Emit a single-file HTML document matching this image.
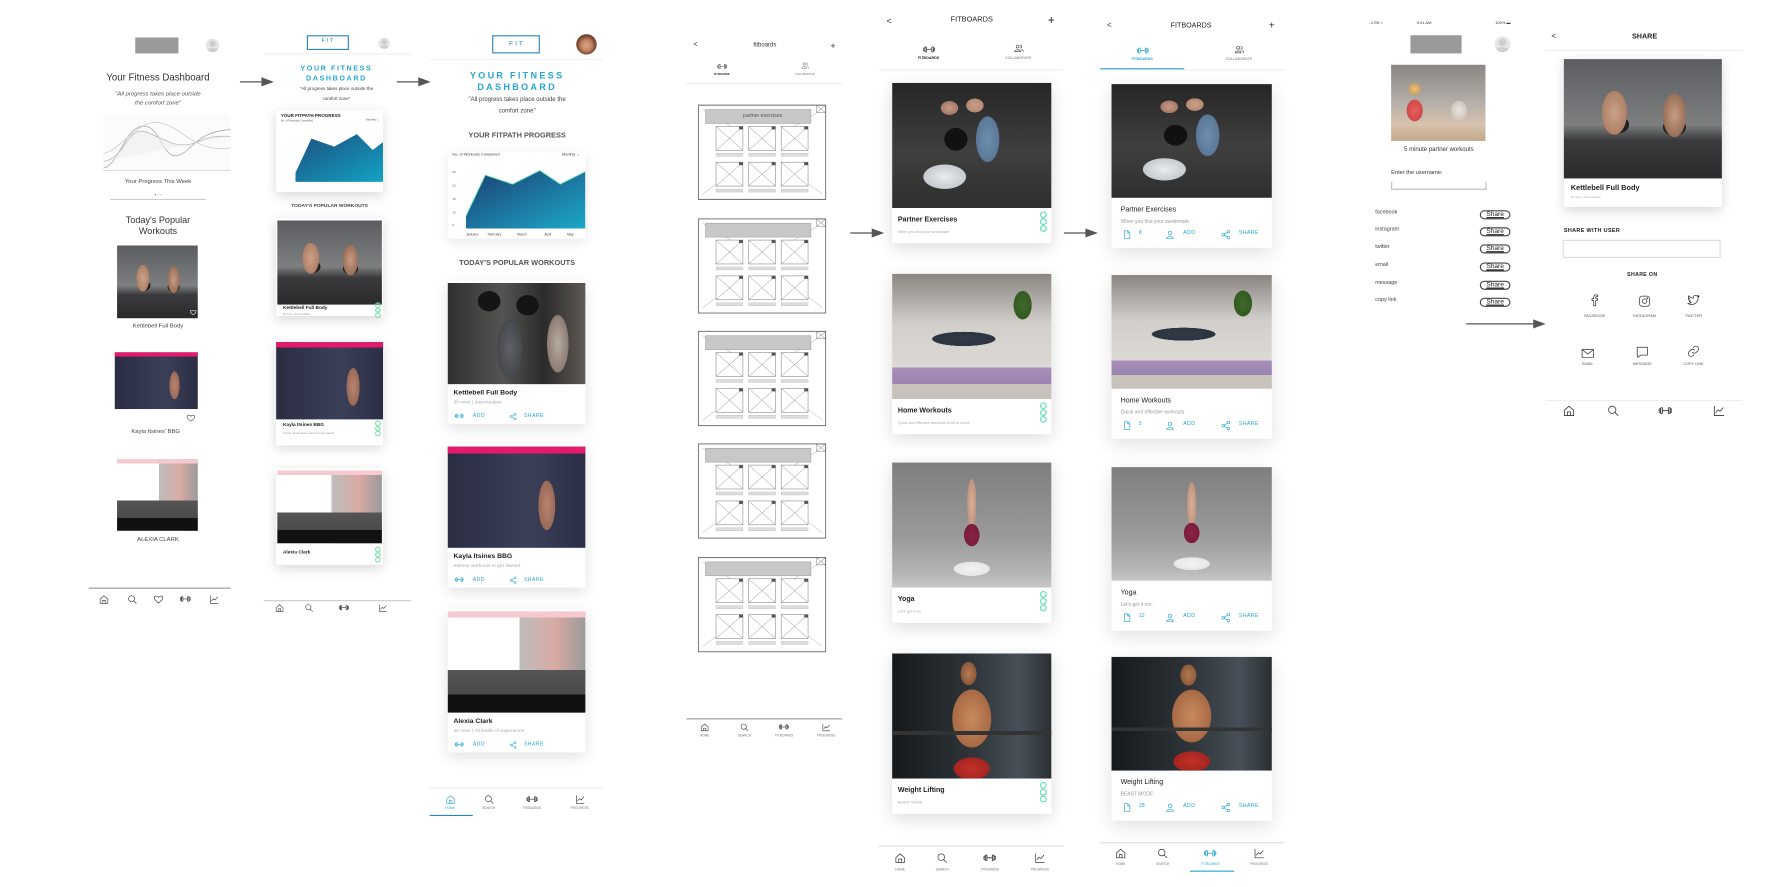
<!DOCTYPE html>
<html><head><meta charset="utf-8">
<style>
html,body{margin:0;padding:0;background:#fff;width:1773px;height:887px;overflow:hidden}
#s{position:absolute;left:0;top:0;width:1560px;height:780px;transform:scale(1.13654);transform-origin:0 0;font-family:"Liberation Sans",sans-serif;color:#222}
.a{position:absolute}
.t{position:absolute;white-space:nowrap;line-height:1}
.card{position:absolute;background:#fff;box-shadow:0 3px 10px rgba(0,0,0,.16)}
svg{display:block}
</style></head><body><div id="s"></div>
<script>
const S=document.getElementById('s');let H='';
function add(h){H+=h}
function T(x,y,txt,sz,o){o=o||{};let al=o.al||'l';let c=o.c||'#222';let w=o.w||200;let left=al=='c'?x-w/2:(al=='r'?x-w:x);
add(`<div class="t" style="left:${left}px;top:${y-sz*0.55}px;width:${w}px;text-align:${al=='c'?'center':al=='r'?'right':'left'};font-size:${sz}px;color:${c};font-weight:${o.b?'bold':'normal'};letter-spacing:${o.ls||0}px;font-style:${o.i?'italic':'normal'}">${txt}</div>`)}
function R(x,y,w,h,st){add(`<div class="a" style="left:${x}px;top:${y}px;width:${w}px;height:${h}px;${st||''}"></div>`)}
const P={
home:'<path d="M3 11L12 3L21 11V21H3Z M9 21V14H15V21"/>',
search:'<circle cx="10" cy="10" r="7"/><path d="M15 15L21 21"/>',
db:'<path d="M7 12H17"/><rect x="4" y="7" width="3" height="10" rx="1"/><rect x="17" y="7" width="3" height="10" rx="1"/><rect x="1.5" y="9" width="2.5" height="6" rx="1"/><rect x="20" y="9" width="2.5" height="6" rx="1"/>',
chart:'<path d="M3 3V21H21 M6 15L10 10L14 13L20 6"/>',
heart:'<path d="M12 20C5 15 2 12 2 8.5C2 5.5 4.5 4 6.8 4C9 4 10.8 5.5 12 7C13.2 5.5 15 4 17.2 4C19.5 4 22 5.5 22 8.5C22 12 19 15 12 20Z"/>',
share:'<circle cx="6" cy="12" r="3"/><circle cx="18" cy="5" r="3"/><circle cx="18" cy="19" r="3"/><path d="M8.6 10.5L15.4 6.5M8.6 13.5L15.4 17.5"/>',
doc:'<path d="M6 3H14L19 8V21H6Z M14 3V8H19"/>',
person:'<circle cx="12" cy="8" r="4"/><path d="M4 21C4 15 20 15 20 21Z"/>',
people:'<circle cx="9" cy="8" r="3.5"/><path d="M2 20C2 14 16 14 16 20Z"/><path d="M15 4.5A3.5 3.5 0 0 1 15 11.5M18 15C21 16 22 18 22 20"/>',
fb:'<path d="M14 22V13H17L17.5 9.5H14V7.5C14 6.5 14.5 6 15.5 6H17.7V3C17 2.9 16 2.8 15 2.8C12.3 2.8 10.5 4.4 10.5 7.3V9.5H7.5V13H10.5V22Z"/>',
ig:'<rect x="3" y="3" width="18" height="18" rx="5"/><circle cx="12" cy="12" r="4"/><circle cx="17" cy="7" r=".8"/>',
tw:'<path d="M22 5.5C21 6 20.2 6.2 19.5 6.3C20.3 5.8 20.9 5 21.2 4C20.4 4.5 19.5 4.8 18.6 5C17.8 4.2 16.8 3.8 15.7 3.8C13.5 3.8 11.7 5.6 11.7 7.8C11.7 8.1 11.7 8.4 11.8 8.7C8.5 8.5 5.5 7 3.5 4.5C2.5 6.5 3.5 8.6 5 9.7C4.3 9.7 3.7 9.5 3.2 9.2C3.2 11.2 4.6 12.8 6.4 13.2C5.8 13.4 5.2 13.4 4.6 13.3C5.1 14.9 6.6 16 8.4 16.1C6.6 17.5 4.300 18.2 2 18C4 19.2 6.2 19.9 8.5 19.9C16.1 19.9 20.2 13.6 20.2 8.2V7.7C21 7.1 21.6 6.4 22 5.5Z"/>',
mail:'<rect x="2" y="5" width="20" height="14"/><path d="M2 5L12 13L22 5"/>',
msg:'<path d="M3 3H21V17H9L4 21V17H3Z"/>',
link:'<path d="M10 14A5 5 0 0 0 17 14L20 11A5 5 0 0 0 13 4L11.5 5.5M14 10A5 5 0 0 0 7 10L4 13A5 5 0 0 0 11 20L12.5 18.5"/>'
};
function I(n,cx,cy,sz,c,sw){add(`<svg class="a" style="left:${cx-sz/2}px;top:${cy-sz/2}px" width="${sz}" height="${sz}" viewBox="0 0 24 24" fill="none" stroke="${c||'#333'}" stroke-width="${sw||1.6}" stroke-linecap="round" stroke-linejoin="round">${P[n]}</svg>`)}
function arrow(x1,x2,y){add(`<svg class="a" style="left:${x1}px;top:${y-5}px" width="${x2-x1}" height="10"><line x1="0" y1="5" x2="${x2-x1-8}" y2="5" stroke="#555" stroke-width="1.1"/><polygon points="${x2-x1-11},1 ${x2-x1},5 ${x2-x1-11},9" fill="#555"/></svg>`)}
function photo(k,x,y,w,h){let bg;
if(k=='kb')bg='radial-gradient(ellipse 13% 30% at 32% 45%,#c9a28a 0,#b08066 60%,transparent 62%),radial-gradient(ellipse 12% 30% at 70% 47%,#c69c84 0,#9a6f58 60%,transparent 62%),radial-gradient(ellipse 8% 8% at 34% 55%,#222 0,#222 90%,transparent 92%),radial-gradient(ellipse 8% 8% at 70% 57%,#222 0,#222 90%,transparent 92%),linear-gradient(#5b5d60 0,#7c7e80 55%,#3b3b3d 68%,#2a2a2c 100%)';
else if(k=='gym')bg='radial-gradient(ellipse 9% 11% at 30% 18%,#151515 0,#151515 90%,transparent 92%),radial-gradient(ellipse 9% 11% at 58% 22%,#151515 0,#151515 90%,transparent 92%),radial-gradient(ellipse 13% 40% at 45% 65%,#5d6166 0,#45484c 70%,transparent 72%),radial-gradient(ellipse 11% 40% at 80% 60%,#b8aba0 0,#8b7d73 70%,transparent 72%),linear-gradient(90deg,#2f2f2f,#545452 40%,#2b2b2b 70%,#5e5954)';
else if(k=='kayla')bg='linear-gradient(#e51a6b 0,#e51a6b 7%,transparent 7%),radial-gradient(ellipse 10% 40% at 72% 58%,#b88470 0,#9a6a57 60%,transparent 62%),linear-gradient(90deg,#2a2d42,#3b3f58 60%,#2b2e44)';
else if(k=='alexia')bg='linear-gradient(#f6c9d0 0,#f6c9d0 6%,transparent 6%),linear-gradient(transparent 0,transparent 58%,#555 58%,#4a4a4a 82%,#111 82%),linear-gradient(90deg,#fff 0,#fff 52%,#bdbdbd 52%,#d9aaa3 78%,#9a9a9a)';
else if(k=='partner')bg='radial-gradient(ellipse 8% 10% at 40% 45%,#111 0,#111 90%,transparent 92%),radial-gradient(ellipse 22% 16% at 33% 75%,#e8ecee 0,#c5cbcf 60%,transparent 62%),radial-gradient(ellipse 12% 30% at 60% 45%,#6f8fb0 0,#5a7896 60%,transparent 62%),radial-gradient(ellipse 9% 9% at 52% 18%,#caa089 0,#b58a73 60%,transparent 62%),radial-gradient(ellipse 9% 9% at 36% 20%,#c69a85 0,#a67a66 60%,transparent 62%),linear-gradient(#262626,#3f3f3f 55%,#2e2e2e)';
else if(k=='home')bg='radial-gradient(ellipse 28% 8% at 45% 52%,#333b48 0,#2c3440 70%,transparent 72%),radial-gradient(ellipse 8% 16% at 82% 25%,#3f6a2a 0,#335a22 70%,transparent 72%),linear-gradient(transparent 0,transparent 75%,#a78fb8 75%,#9b82b0 88%,#c8c2bd 88%),linear-gradient(#8a8580,#d2cec9 40%,#e4e0dc)';
else if(k=='yoga')bg='radial-gradient(ellipse 6% 11% at 50% 58%,#8a2245 0,#7a1c3c 80%,transparent 82%),radial-gradient(ellipse 14% 7% at 50% 85%,#f4f4f4 0,#e6e6e6 80%,transparent 82%),radial-gradient(ellipse 4% 28% at 50% 33%,#d8b09a 0,#c0957f 70%,transparent 72%),linear-gradient(#7e7e7e,#9a9a9a 60%,#b6b6b6 90%,#c8c8c8)';
else if(k=='weights')bg='linear-gradient(transparent 0,transparent 62%,#333 62%,#333 65%,transparent 65%),radial-gradient(ellipse 14% 11% at 50% 92%,#c4302a 0,#a52520 80%,transparent 82%),radial-gradient(ellipse 20% 38% at 50% 52%,#c98a60 0,#a86a45 60%,transparent 62%),radial-gradient(ellipse 7% 13% at 48% 16%,#b57a55 0,#8c5a3a 70%,transparent 72%),linear-gradient(90deg,#15191c,#2e3439 50%,#475058 80%,#2a2f33)';
else if(k=='hi5')bg='radial-gradient(ellipse 12% 20% at 25% 60%,#e86060 0,#d04848 70%,transparent 72%),radial-gradient(ellipse 12% 18% at 72% 60%,#e9e3dc 0,#cfc7bf 70%,transparent 72%),radial-gradient(ellipse 9% 11% at 25% 32%,#e8c27a 0,#caa060 70%,transparent 72%),linear-gradient(#8a8683,#b5afa9 50%,#d6c2ad 78%,#c4a888)';
add(`<div class="a" style="left:${x}px;top:${y}px;width:${w}px;height:${h}px;background:${bg}"></div>`)}
function avatar(cx,cy,r){add(`<div class="a" style="left:${cx-r}px;top:${cy-r}px;width:${2*r}px;height:${2*r}px;border-radius:50%;overflow:hidden;background:radial-gradient(circle at 50% 38%,#cfcfcf 0,#cfcfcf 28%,transparent 30%),radial-gradient(ellipse 55% 35% at 50% 100%,#cfcfcf 0,#cfcfcf 90%,transparent 92%),#e6e6e6"></div>`)}
function dots(x,y,c,s){s=s||3;for(let i=0;i<3;i++)add(`<div class="a" style="left:${x}px;top:${y+i*(s+2)}px;width:${s}px;height:${s}px;border:0.8px solid ${c};border-radius:50%"></div>`)}
function nav(x1,x2,y,iy,ly,pos,sz,act,labels,col){R(x1,y,x2-x1,0.8,'background:'+(col||'#ccc'));
['home','search','db','chart'].forEach((n,i)=>{I(n,pos[i],iy,n=='db'?sz*1.15:sz,i===act?'#26a7cf':'#333',1.5);
if(labels)T(pos[i],ly,labels[i],2.8,{al:'c',c:i===act?'#26a7cf':'#777',w:40});});}
const L=['HOME','SEARCH','FITBOARDS','PROGRESS'];

/* ===== Screen 1 ===== */
R(119,33,38,14,'background:#9a9a9a');avatar(187,40,6);
T(139,69,'Your Fitness Dashboard',8.5,{al:'c',c:'#333'});
T(139,84,'"All progress takes place outside',5.2,{al:'c',c:'#555',i:1});
T(139,92,'the comfort zone"',5.2,{al:'c',c:'#555',i:1});
add(`<svg class="a" style="left:91px;top:100px" width="112" height="52"><rect x="0" y="0" width="112" height="50" fill="#fbfbfb"/><path d="M0 48C15 44 18 12 35 11C50 10 52 40 65 37C78 34 80 16 112 14" stroke="#aaa" fill="none" stroke-width=".7"/><path d="M0 42C20 40 20 8 40 17C60 26 65 30 80 26C90 22 95 19 112 20" stroke="#bbb" fill="#eee" fill-opacity=".6" stroke-width=".7"/><path d="M0 35C15 33 30 4 50 8C70 12 80 35 112 30" stroke="#ccc" fill="none" stroke-width=".7"/><line x1="0" y1="50" x2="112" y2="50" stroke="#ddd"/></svg>`);
T(139,161,'Your Progress This Week',5.2,{al:'c',c:'#444'});
T(139,172,'● ○ ○',2.5,{al:'c',c:'#555'});R(97,175,84,0.6,'background:#ccc');
T(139,194,'Today\'s Popular',8,{al:'c',c:'#333'});T(139,204,'Workouts',8,{al:'c',c:'#333'});
photo('kb',103,216,71,64);I('heart',170,275,6,'#fff',2);
T(139,288,'Kettlebell Full Body',5.2,{al:'c',c:'#444'});
photo('kayla',101,310,73,50);R(101,360,73,6,'background:#fff');I('heart',168,368,8,'#444',1.5);
T(137,381,'Kayla Itsines\' BBG',5.2,{al:'c',c:'#444'});
photo('alexia',103,404,71,63);
T(139,476,'ALEXIA CLARK',5.2,{al:'c',c:'#444'});
R(78,517,125,0.8,'background:#999');
[['home',91],['search',116],['heart',139],['db',163],['chart',188]].forEach(([n,x])=>I(n,x,527,n=='db'?10:9,'#333',1.5));

/* arrows */
arrow(211,241,72);arrow(349,379,72);arrow(748,778,205);arrow(936,966,205);arrow(1290,1360,285);

/* ===== Screen 2 ===== */
R(270,31,37,13,'border:1.3px solid #2a86b8;box-sizing:border-box');T(288,37,'F I T',5,{al:'c',c:'#2a86b8'});
avatar(338,38,5);R(232,47,130,0.7,'background:#eee');
T(296,61,'YOUR FITNESS',6.3,{al:'c',c:'#26a7cf',b:1,ls:1.4});T(296,70,'DASHBOARD',6.3,{al:'c',c:'#26a7cf',b:1,ls:1.4});
T(296,78,'"All progress takes place outside the',4,{al:'c',c:'#444'});T(296,87,'comfort zone"',4,{al:'c',c:'#444'});
add(`<div class="card" style="left:243px;top:97px;width:94px;height:72px"></div>`);
T(247,102,'YOUR FITPATH PROGRESS',4,{b:1});T(247,107,'No. of Workouts Completed',2.3,{c:'#555'});T(334,106,'Monthly ⌄',2.6,{al:'r',c:'#555',w:40});
add(`<svg class="a" style="left:244px;top:112px" width="93" height="50"><defs><linearGradient id="g1" x1="0" y1="0" x2="1" y2="1"><stop offset="0" stop-color="#1c4f80"/><stop offset="1" stop-color="#13a2c4"/></linearGradient></defs><polygon points="16,48 16,40 30,10 50,17 70,6 84,20 93,13 93,48" fill="url(#g1)"/></svg>`);
T(290,181,'TODAY\'S POPULAR WORKOUTS',4.3,{al:'c',c:'#444',b:1});
add(`<div class="card" style="left:243px;top:192px;width:94px;height:86px"></div>`);photo('kb',244,194,92,74);
T(249,271,'Kettlebell Full Body',4.2,{b:1});T(249,277,'30 mins | Intermediate',2.4,{c:'#999'});dots(330,266,'#7fe0b0',2.5);
add(`<div class="card" style="left:243px;top:300px;width:94px;height:92px"></div>`);photo('kayla',243,301,94,68);
T(249,374,'Kayla Itsines BBG',4.2,{b:1});T(249,382,'Intense "Great intense workouts to get started"',2.2,{c:'#999'});dots(330,370,'#7fe0b0',2.5);
add(`<div class="card" style="left:243px;top:412px;width:94px;height:85px"></div>`);photo('alexia',244,414,92,64);
T(249,486,'Alexia Clark',4.2,{b:1});dots(330,481,'#7fe0b0',2.5);
nav(232,362,528,535,0,[246,272,303,337],8,-1,null,'#ccc');

/* ===== Screen 3 ===== */
R(433,31,42,16,'border:1.5px solid #2a86b8;box-sizing:border-box');T(454,39,'F I T',6,{al:'c',c:'#2a86b8'});
add(`<div class="a" style="left:507px;top:30px;width:18px;height:18px;border-radius:50%;background:radial-gradient(circle at 50% 55%,#d9a78a 0,#c08463 35%,#7a4a33 60%,#5a3525 100%)"></div>`);
R(378,52,153,0.7,'background:#f0f0f0');
T(455,67,'YOUR FITNESS',8,{al:'c',c:'#26a7cf',b:1,ls:2});T(455,77,'DASHBOARD',8,{al:'c',c:'#26a7cf',b:1,ls:2});
T(455,89,'"All progress takes place outside the',5.3,{al:'c',c:'#444'});T(455,99,'comfort zone"',5.3,{al:'c',c:'#444'});
T(455,121,'YOUR FITPATH PROGRESS',6.5,{al:'c',c:'#555',b:1});
add(`<div class="card" style="left:394px;top:133px;width:121px;height:77px;box-shadow:0 3px 10px rgba(0,0,0,.1)"></div>`);
T(398,137,'No. of Workouts Completed',3.4,{c:'#444'});T(510,137,'Monthly ⌄',3.4,{al:'r',c:'#444',w:40});
T(398,152,'25',2.6,{c:'#555'});T(398,164,'20',2.6,{c:'#555'});T(398,176,'15',2.6,{c:'#555'});T(398,188,'10',2.6,{c:'#555'});T(398,199,'0',2.6,{c:'#555'});
add(`<svg class="a" style="left:407px;top:140px" width="108" height="61"><defs><linearGradient id="g2" x1="0" y1="0" x2="1" y2="1"><stop offset="0" stop-color="#1b3f73"/><stop offset="1" stop-color="#1ca8c9"/></linearGradient></defs><polygon points="3,61 3,50 20,14 44,22 68,10 86,22 108,11 108,61" fill="url(#g2)"/><polyline points="3,50 20,14 44,22 68,10 86,22 108,11" stroke="#6fe6b8" fill="none" stroke-width=".8"/></svg>`);
T(410,207,'January',3,{c:'#444'});T(429,207,'February',3,{c:'#444'});T(455,207,'March',3,{c:'#444'});T(479,207,'April',3,{c:'#444'});T(499,207,'May',3,{c:'#444'});
T(455,233,'TODAY\'S POPULAR WORKOUTS',6.5,{al:'c',c:'#555',b:1});
function c3(y,k,t,s){add(`<div class="card" style="left:394px;top:${y}px;width:121px;height:126px;box-shadow:0 4px 12px rgba(0,0,0,.12)"></div>`);photo(k,394,y+2,121,89);
T(399,y+99,t,6,{b:1,c:'#222'});T(399,y+107,s,4.3,{c:'#aaa'});
I('db',404,y+119,8,'#26a7cf');T(416,y+119,'ADD',4.5,{c:'#26a7cf',ls:.4});I('share',451,y+119,7,'#26a7cf');T(461,y+119,'SHARE',4.5,{c:'#26a7cf',ls:.4});}
c3(247,'gym','Kettlebell Full Body','30 mins | Intermediate');
c3(391,'kayla','Kayla Itsines BBG','Intense workouts to get started.');
c3(536,'alexia','Alexia Clark','40 mins | All levels of experience');
nav(378,531,693,703,712,[396,430,468,510],9,0,L,'#eee');
R(378,717,38,1.3,'background:#2a86b8');

/* ===== Screen 4 wireframe ===== */
T(610,41,'&lt;',6.5,{c:'#333'});T(673,41,'fitboards',5.3,{al:'c',c:'#333'});T(733,41,'+',8,{al:'c',c:'#333',w:20});
I('db',635,58,9,'#555',1.4);T(635,66,'FITBOARDS',2.4,{al:'c',b:1,w:40});I('people',708,57,7,'#555',1.4);T(708,66,'COLLABORATE',2.4,{al:'c',c:'#777',w:40});
R(604,73,137,0.7,'background:#eee');
function wf(y){let x=614;add(`<svg class="a" style="left:${x}px;top:${y}px" width="113" height="84" viewBox="0 0 134 96" preserveAspectRatio="none"><rect x=".6" y=".6" width="132.8" height="94.8" fill="#fff" stroke="#777" stroke-width="1.1"/><line x1="5" y1="5" x2="40" y2="25" stroke="#aaa" stroke-width=".5"/><line x1="130" y1="5" x2="95" y2="25" stroke="#aaa" stroke-width=".5"/><line x1="5" y1="90" x2="40" y2="65" stroke="#aaa" stroke-width=".5"/><line x1="130" y1="90" x2="95" y2="65" stroke="#aaa" stroke-width=".5"/>`+
[0,1,2].map(i=>[0,1].map(j=>{let bx=19+i*34,by=22+j*36;return `<rect x="${bx}" y="${by}" width="28" height="24" fill="#fff" stroke="#888" stroke-width=".6"/><line x1="${bx}" y1="${by}" x2="${bx+28}" y2="${by+24}" stroke="#888" stroke-width=".5"/><line x1="${bx+28}" y1="${by}" x2="${bx}" y2="${by+24}" stroke="#888" stroke-width=".5"/><rect x="${bx+24}" y="${by}" width="4" height="3" fill="#555"/><rect x="${bx}" y="${by+27}" width="28" height="3" fill="#ddd" stroke="#bbb" stroke-width=".4"/>`}).join('')).join('')+
`<rect x="8" y="5" width="110" height="14" fill="#c8c8c8" stroke="#999" stroke-width=".5"/><rect x="124" y="1" width="9" height="7" fill="#fff" stroke="#777" stroke-width=".5"/><path d="M124 1L133 8M133 1L124 8" stroke="#777" stroke-width=".5"/></svg>`);}
[92,192,291,390,490].forEach(wf);
T(671,102,'partner exercises',4.5,{al:'c',c:'#555'});
nav(604,741,632,640,648,[620,655,690,727],8,-1,L,'#999');

/* ===== Screen 5 ===== */
T(780,19,'&lt;',8,{c:'#333'});T(855,19,'FITBOARDS',6.5,{al:'c',c:'#222'});T(925,19,'+',10.5,{al:'c',c:'#222',w:20});
I('db',817,43,11,'#333',1.4);T(817,52,'FITBOARDS',3.2,{al:'c',b:1,w:50});I('people',896,42,9,'#333',1.4);T(896,52,'COLLABORATE',3.2,{al:'c',c:'#777',w:50});
R(773,61,163,0.8,'background:#eee');
function c5(y,k,t,s){add(`<div class="card" style="left:785px;top:${y}px;width:140px;height:141px;box-shadow:0 4px 14px rgba(0,0,0,.14)"></div>`);photo(k,785,y,140,110);
T(790,y+121,t,6.2,{b:1,c:'#222'});T(790,y+132,s,3.3,{c:'#aaa'});dots(915,y+113,'#5fe0b0',4);}
c5(73,'partner','Partner Exercises','When you find your swolemate');
c5(241,'home','Home Workouts','Quick and effective workouts to do at home.');
c5(407,'yoga','Yoga','Let\'s get it om.');
c5(575,'weights','Weight Lifting','BEAST MODE');
nav(773,936,744,755,766,[792,829,871,915],10,-1,L,'#ddd');

/* ===== Screen 6 ===== */
T(974,23,'&lt;',7,{c:'#333'});T(1048,23,'FITBOARDS',6.3,{al:'c',c:'#222'});T(1119,23,'+',9,{al:'c',c:'#222',w:20});
I('db',1005,44,11,'#26a7cf',1.4);T(1005,53,'FITBOARDS',3.2,{al:'c',b:1,c:'#26a7cf',w:50});I('people',1090,43,9,'#333',1.4);T(1090,53,'COLLABORATE',3.2,{al:'c',c:'#777',w:50});
R(968,61,162,0.7,'background:#eee');R(968,60,74,1.3,'background:#26a7cf');
function c6(y,k,t,s,n){add(`<div class="card" style="left:978px;top:${y}px;width:141px;height:144px;box-shadow:0 5px 16px rgba(0,0,0,.12)"></div>`);photo(k,978,y,141,100);
T(986,y+111,t,6.2,{c:'#222'});T(986,y+121,s,4.4,{c:'#999'});
let yy=y+132;I('doc',991,yy,9,'#26a7cf',1.5);T(1002,yy,n,4.6,{c:'#26a7cf'});I('person',1029,yy,9,'#26a7cf',1.5);T(1041,yy,'ADD',4.7,{c:'#26a7cf',ls:.3});I('share',1078,yy,9,'#26a7cf',1.5);T(1090,yy,'SHARE',4.7,{c:'#26a7cf',ls:.3});}
c6(74,'partner','Partner Exercises','When you find your swolemate.','8');
c6(242,'home','Home Workouts','Quick and effective workouts','5');
c6(411,'yoga','Yoga','Let\'s get it om.','12');
c6(578,'weights','Weight Lifting','BEAST MODE','28');
nav(968,1130,741,751,761,[986,1023,1065,1108],10,2,L,'#ddd');
R(1047,766,39,1.3,'background:#26a7cf');

/* ===== Screen 7 ===== */
T(1204,21,'..ıl GS ≈',3.5,{c:'#333'});T(1253,21,'9:41 AM',3.5,{al:'c',c:'#333'});T(1329,21,'100% ▬',3.5,{al:'r',c:'#333',w:40});
R(1241,31,45,16,'background:#9a9a9a');avatar(1322,39,7);
photo('hi5',1224,57,83,67);
T(1266,133,'5 minute partner workouts',5.3,{al:'c',c:'#333'});
T(1224,153,'Enter the username:',5,{c:'#333'});R(1224,160,84,7,'border:0.8px solid #bbb;border-top:none;box-sizing:border-box');
[['facebook',189],['instagram',204],['twitter',219],['email',235],['message',251],['copy link',266]].forEach(([l,y])=>{T(1210,y,l,4.8,{c:'#444'});add(`<div class="a" style="left:1302px;top:${y-3.8}px;width:27px;height:7.5px;border:0.8px solid #444;border-radius:5px;box-sizing:border-box;font-size:5.8px;line-height:6.2px;text-align:center;color:#222;text-decoration:underline">Share</div>`);});

/* ===== Screen 8 ===== */
T(1365,33,'&lt;',7,{c:'#222'});T(1447,33,'SHARE',6.3,{al:'c',b:1,c:'#222'});
R(1360,44,173,0.7,'background:#eee');
add(`<div class="card" style="left:1376px;top:52px;width:139px;height:130px"></div>`);photo('kb',1376,52,139,105);
T(1382,167,'Kettlebell Full Body',6.5,{b:1});T(1382,174,'30 mins | Intermediate',2.7,{c:'#aaa'});
T(1376,205,'SHARE WITH USER',4.8,{b:1,c:'#222',ls:.3});R(1375,211,139,16,'border:0.8px solid #ddd;box-sizing:border-box');
T(1445,243,'SHARE ON',4.6,{al:'c',b:1,c:'#222',ls:.3});
[['fb',1403,264,'FACEBOOK'],['ig',1447,265,'INSTAGRAM'],['tw',1490,264,'TWITTER'],['mail',1397,311,'EMAIL'],['msg',1445,310,'MESSAGE'],['link',1490,309,'COPY LINK']].forEach(([n,x,y,l],i)=>{I(n,x,y,12,'#333',1.3);T(x,i<3?279:321,l,3.4,{al:'c',c:'#555',w:50});});
nav(1360,1533,352,361,0,[1380,1419,1465,1512],11,-1,null,'#eee');

S.innerHTML=H;
</script>
</body></html>
